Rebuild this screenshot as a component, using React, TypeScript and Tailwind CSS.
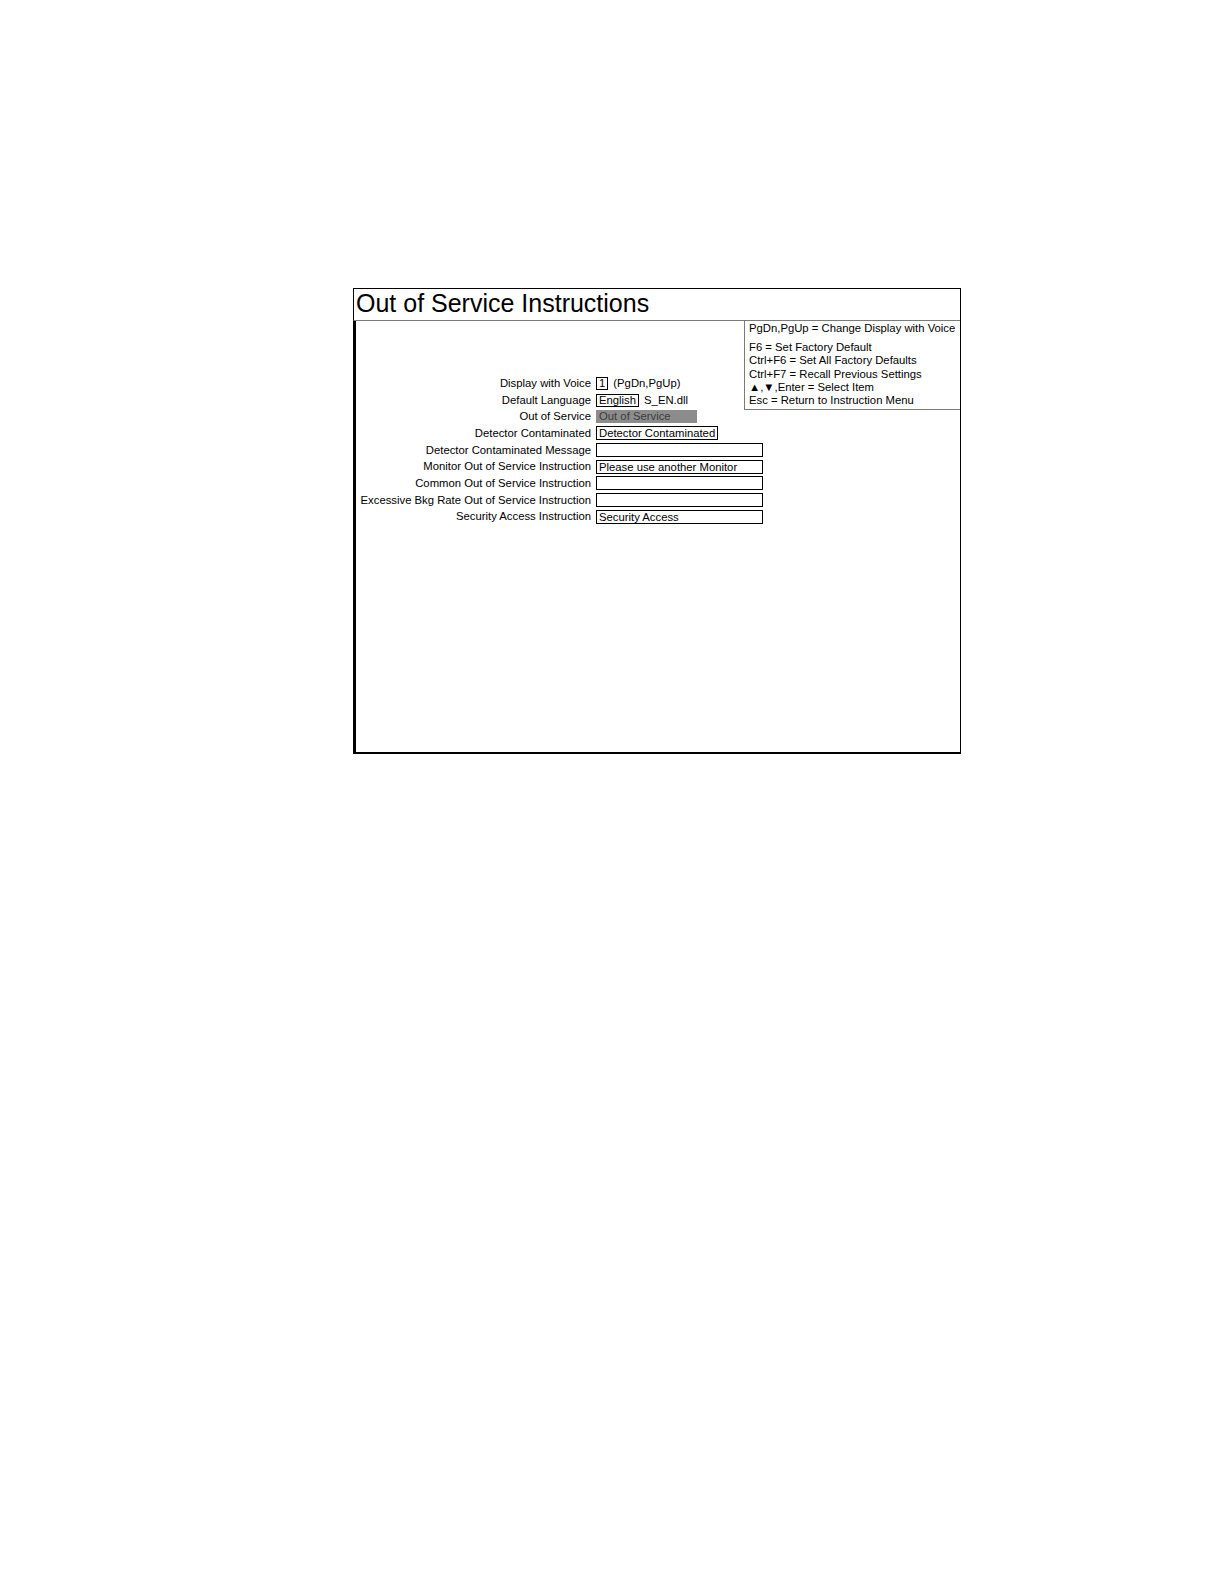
import React from "react";

const rows = [
  { label: "Display with Voice", kind: "voice" },
  { label: "Default Language", kind: "lang" },
  { label: "Out of Service", kind: "selected", value: "Out of Service" },
  { label: "Detector Contaminated", kind: "fit", value: "Detector Contaminated" },
  { label: "Detector Contaminated Message", kind: "wide", value: "" },
  { label: "Monitor Out of Service Instruction", kind: "wide", value: "Please use another Monitor" },
  { label: "Common Out of Service Instruction", kind: "wide", value: "" },
  { label: "Excessive Bkg Rate Out of Service Instruction", kind: "wide", value: "" },
  { label: "Security Access Instruction", kind: "wide", value: "Security Access" },
];

const helpLines = [
  "F6 = Set Factory Default",
  "Ctrl+F6 = Set All Factory Defaults",
  "Ctrl+F7 = Recall Previous Settings",
  "\u25B2,\u25BC,Enter = Select Item",
  "Esc = Return to Instruction Menu",
];

const Field = ({ row }: { row: (typeof rows)[number] }) => {
  if (row.kind === "voice") {
    return (
      <div className="flex items-center">
        <span className="border border-black px-[2px] leading-[11px]">1</span>
        <span className="ml-[5px]">(PgDn,PgUp)</span>
      </div>
    );
  }
  if (row.kind === "lang") {
    return (
      <div className="flex items-center">
        <span className="border border-black px-[2px] leading-[11px]">English</span>
        <span className="ml-[5px]">S_EN.dll</span>
      </div>
    );
  }
  if (row.kind === "selected") {
    return (
      <div className="w-[101px] h-[13px] bg-[#8c8c8c] text-[#3c3c3c] pl-[3px] leading-[13px]">
        {row.value}
      </div>
    );
  }
  if (row.kind === "fit") {
    return <span className="border border-black px-[2px] leading-[12px]">{row.value}</span>;
  }
  return (
    <div className="w-[167px] shrink-0 h-[14px] border border-black px-[2px] leading-[12px] whitespace-nowrap">
      {row.value}
    </div>
  );
};

export default function App() {
  return (
    <div
      className="min-h-[1584px] bg-white text-black pt-[288px] pl-[353px]"
      style={{ fontFamily: '"Liberation Sans", Arial, sans-serif' }}
    >
      <div className="w-[608px] h-[466px] flex flex-col border-t border-r border-b-2 border-black">
        {/* Title */}
        <div className="h-[32px] shrink-0 border-l border-black border-b border-b-[#7a7a7a] pl-[2px] text-[25px] leading-[29px]">
          Out of Service Instructions
        </div>

        {/* Body */}
        <div className="flex-1 flex border-l-[3px] border-black text-[11.3px]">
          {/* Form */}
          <div className="flex-1 min-w-0 pt-[54px]">
            {rows.map((row) => (
              <div key={row.label} className="flex items-center h-[16.7px]">
                <div className="w-[240px] shrink-0 text-right pr-[5px] whitespace-nowrap">{row.label}</div>
                <Field row={row} />
              </div>
            ))}
          </div>

          {/* Key help */}
          <div className="w-[216px] h-[89px] shrink-0 border-l border-b border-[#7a7a7a] pl-[4px] pt-[1px] leading-[13.2px] whitespace-nowrap">
            <div>PgDn,PgUp = Change Display with Voice</div>
            <div className="mt-[6px]">
              {helpLines.map((line) => (
                <div key={line}>{line}</div>
              ))}
            </div>
          </div>
        </div>
      </div>
    </div>
  );
}
